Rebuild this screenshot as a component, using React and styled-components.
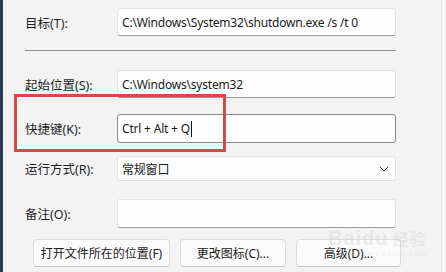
import React from 'react'
import styled, { createGlobalStyle } from 'styled-components'

const GlobalStyle = createGlobalStyle`
    html, body {
        margin: 0;
        padding: 0;
        background: #f3f3f3;
    }
    body {
        font-family: "Noto Sans", "Noto Sans CJK SC", sans-serif;
        font-size: 12px;
        color: #1b1b1b;
    }
`

const Window = styled.div`
    position: relative;
    width: 446px;
    height: 272px;
    overflow: hidden;
    display: flex;
    background: #f9f9f9;
`

const Edge = styled.div`
    width: 3px;
    background: #2d3b57;
`

const Panel = styled.div`
    width: 439px;
    background: #f3f3f3;
    border-right: 1px solid #e6e6e6;
    display: flex;
    flex-direction: column;
    padding: 8px 0 0 22px;
    box-sizing: border-box;
`

const Row = styled.div`
    display: grid;
    grid-template-columns: 92px 279px;
    align-items: center;
    margin-top: ${props => props.top || 0}px;
`

const Label = styled.span`
    font-size: 12.5px;
    color: #1f1f1f;
`

const Field = styled.div`
    height: ${props => props.h || 28}px;
    box-sizing: border-box;
    background: #fdfdfd;
    border: 1px solid ${props => props.focused ? '#8a8a8a' : '#e3e3e3'};
    border-bottom-color: ${props => props.focused ? '#8a8a8a' : '#9a9a9a'};
    border-radius: 3px;
    display: flex;
    align-items: center;
    padding-left: 4px;
    font-size: 12px;
    letter-spacing: -0.2px;
    color: #1a1a1a;
    white-space: nowrap;
    overflow: hidden;
`

const Caret = styled.span`
    display: inline-block;
    width: 1px;
    height: 16px;
    background: #111;
    margin-left: 1px;
`

const Select = styled(Field)`
    border-bottom-color: #e0e0e0;
    justify-content: space-between;
    padding-right: 6px;
`

const Divider = styled.div`
    width: 371px;
    height: 1px;
    background: #8f8f8f;
    margin-top: 14px;
`

const Buttons = styled.div`
    display: flex;
    gap: 10px;
    margin-top: 11px;
    padding-left: 8px;
`

const Button = styled.div`
    width: ${props => props.w}px;
    height: 28px;
    box-sizing: border-box;
    border: 1px solid #dcdcdc;
    border-bottom-color: #c4c4c4;
    border-radius: 4px;
    background: #fbfbfb;
    display: flex;
    align-items: center;
    justify-content: center;
    font-size: 12px;
    color: #1b1b1b;
`

const Highlight = styled.div`
    position: absolute;
    left: 14px;
    top: 94px;
    width: 212px;
    height: 58px;
    box-sizing: border-box;
    border: 3px solid #d44a4c;
    pointer-events: none;
`

const Watermark = styled.div`
    position: absolute;
    left: 328px;
    top: 228px;
    font-family: "Liberation Sans", sans-serif;
    font-size: 20px;
    font-weight: bold;
    line-height: 20px;
    color: rgba(205, 205, 205, 0.35);
    letter-spacing: 1px;
    pointer-events: none;
    span {
        font-family: "Noto Sans CJK SC", sans-serif;
        font-size: 16px;
        margin-left: 4px;
    }
    small {
        display: block;
        font-size: 8px;
        line-height: 9px;
        font-weight: normal;
        margin: 1px 0 0 18px;
    }
`

function Chevron() {
    return (
        <svg width="10" height="6" viewBox="0 0 10 6">
            <path d="M1 1l4 4 4-4" fill="none" stroke="#444" strokeWidth="1" />
        </svg>
    )
}

export default function App() {
    return (
        <>
            <GlobalStyle />
            <Window>
                <Edge />
                <Panel>
                    <Row>
                        <Label>目标(T):</Label>
                        <Field>C:\Windows\System32\shutdown.exe /s /t 0</Field>
                    </Row>
                    <Divider />
                    <Row top={19}>
                        <Label>起始位置(S):</Label>
                        <Field>C:\Windows\system32</Field>
                    </Row>
                    <Row top={16}>
                        <Label>快捷键(K):</Label>
                        <Field h={29} focused>Ctrl + Alt + Q<Caret /></Field>
                    </Row>
                    <Row top={13}>
                        <Label>运行方式(R):</Label>
                        <Select h={25}>常规窗口<Chevron /></Select>
                    </Row>
                    <Row top={18}>
                        <Label>备注(O):</Label>
                        <Field h={29} />
                    </Row>
                    <Buttons>
                        <Button w={137}>打开文件所在的位置(F)</Button>
                        <Button w={106}>更改图标(C)...</Button>
                        <Button w={105}>高级(D)...</Button>
                    </Buttons>
                </Panel>
                <Highlight />
                <Watermark>
                    Baidu<span>经验</span>
                    <small>jingyan.baidu.com</small>
                </Watermark>
            </Window>
        </>
    )
}
